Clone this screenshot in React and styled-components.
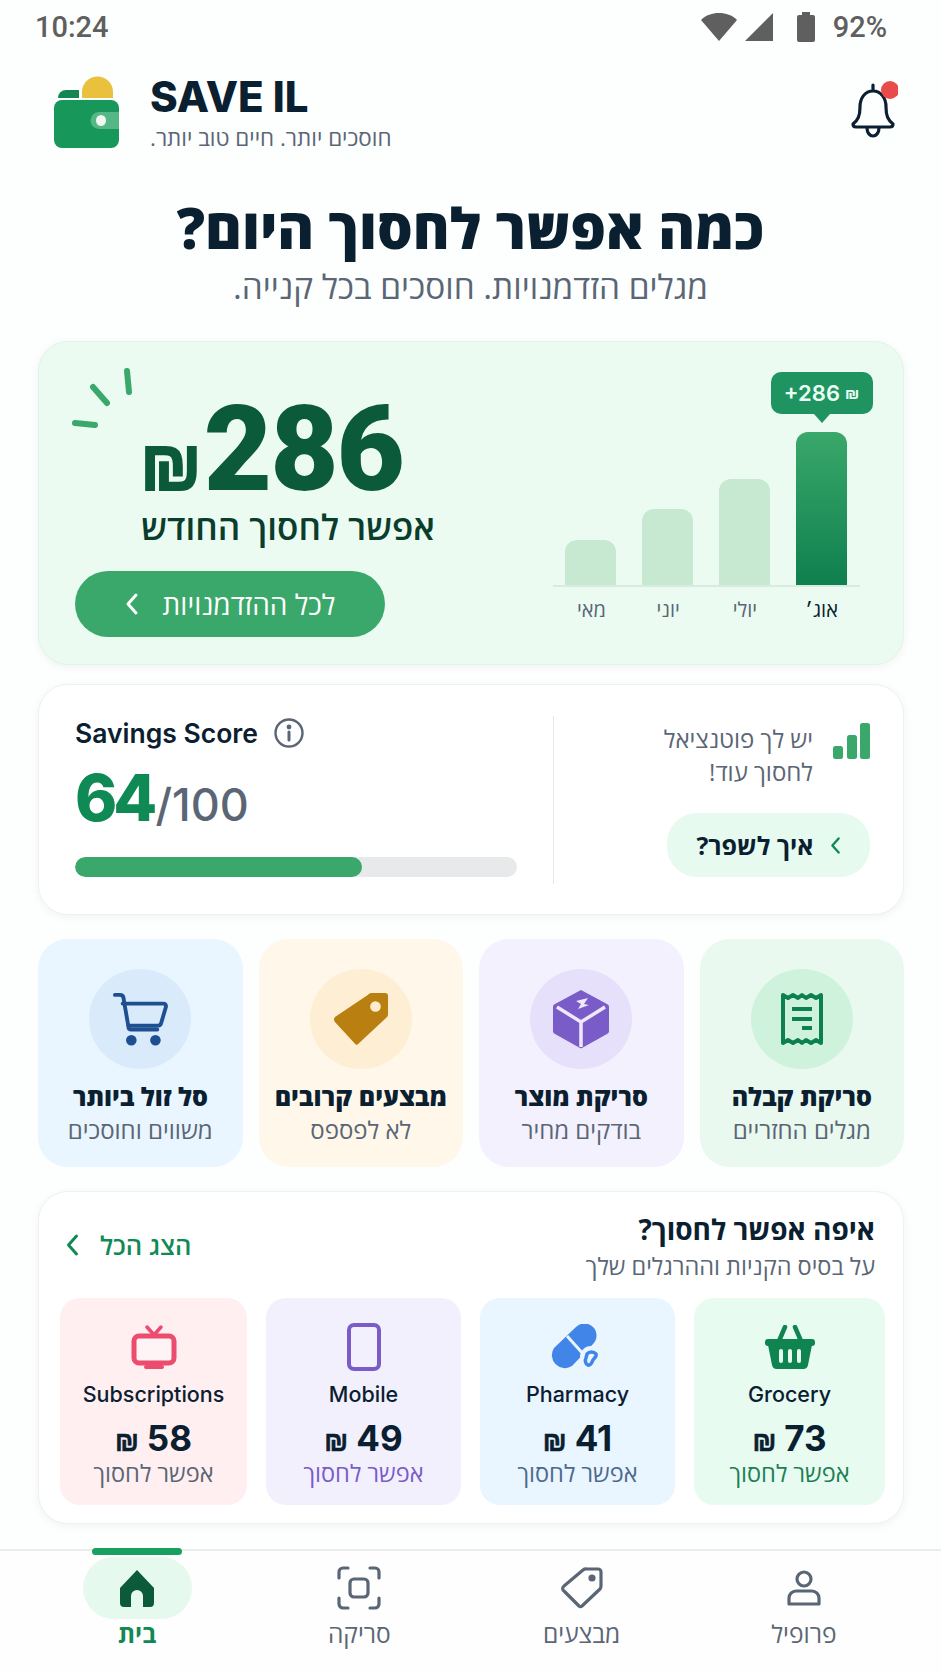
import React from 'react';
import styled, { createGlobalStyle } from 'styled-components';

const HEB = `"Open Sans", "Liberation Sans", sans-serif`;
const INK = '#0a2030';
const GREY = '#5a6675';
const GREEN = '#3aa86a';
const DEEP = '#0f8a55';

const Global = createGlobalStyle`
  html, body { margin: 0; padding: 0; background: #fdfefe; }
  * { box-sizing: border-box; }
  p, h1, h2, h3 { margin: 0; font-weight: inherit; }
`;

const Page = styled.div`
  width: 941px;
  height: 1672px;
  display: flex;
  flex-direction: column;
  overflow: hidden;
  background: #fdfefe;
  font-family: ${HEB};
  color: ${INK};
`;

const StatusBar = styled.div`
  height: 54px;
  direction: ltr;
  display: flex;
  align-items: center;
  justify-content: space-between;
  padding: 0 54px 0 35px;
  color: #5f5f5f;
  font-family: Roboto, sans-serif;
  font-size: 29px;
  font-weight: 500;
`;

const StatusIcons = styled.div`
  display: flex;
  align-items: center;
  gap: 8px;
`;

const Battery = styled.svg`
  margin-left: 16px;
`;

const Percent = styled.span`
  margin-left: 10px;
`;

const Header = styled.header`
  direction: ltr;
  height: 100px;
  margin-top: 12px;
  padding: 10px 43px 0 54px;
  display: flex;
  align-items: flex-start;
  justify-content: space-between;
`;

const Brand = styled.div`
  display: flex;
  gap: 31px;
`;

const BrandName = styled.div`
  font-family: Inter, sans-serif;
  font-weight: 800;
  font-size: 42px;
  line-height: 48px;
  margin-top: -3px;
`;

const BrandTag = styled.p`
  direction: rtl;
  text-align: right;
  font-size: 22.4px;
  line-height: 26px;
  color: ${GREY};
  margin-top: 4px;
`;

const BellWrap = styled.div`
  margin-top: 5px;
`;

const Hero = styled.div`
  text-align: center;
  margin-top: 26px;
  height: 149px;
`;

const Title = styled.h1`
  font-size: 56px;
  font-weight: 800;
  line-height: 64px;
  margin-top: 3px;
`;

const Lead = styled.p`
  font-size: 33.4px;
  line-height: 44px;
  color: ${GREY};
  margin-top: 5px;
`;

const Main = styled.main`
  padding: 0 37px 0 38px;
  display: flex;
  flex-direction: column;
`;

const Card = styled.section`
  border-radius: 30px;
  background: #fff;
  border: 1px solid #eef1f0;
  box-shadow: 0 2px 10px rgba(20, 50, 40, 0.05);
`;

const SaveCard = styled(Card)`
  position: relative;
  height: 324px;
  background: #ebfbf2;
  border-color: #dff5e7;
  display: flex;
  padding: 31px 43px 0 36px;
  justify-content: space-between;
`;

const Rays = styled.svg`
  position: absolute;
  left: 30px;
  top: 20px;
`;

const Chart = styled.div`
  width: 307px;
  display: flex;
  flex-direction: column;
`;

const Bars = styled.div`
  height: 214px;
  display: flex;
  align-items: flex-end;
  gap: 26px;
  padding: 0 13px;
  border-bottom: 2px solid #d9ebe0;
`;

const BarCol = styled.div`
  width: 51px;
  display: flex;
  flex-direction: column;
  align-items: center;
`;

const Bar = styled.div`
  width: 51px;
  height: ${(p) => p.$h}px;
  border-radius: 12px 12px 0 0;
  background: ${(p) => (p.$on ? `linear-gradient(#3aa86a, #0f7f4f)` : '#c7e9d2')};
`;

const Badge = styled.div`
  direction: ltr;
  width: 102px;
  height: 42px;
  flex-shrink: 0;
  border-radius: 10px;
  background: #1f9360;
  color: #eafff3;
  font-family: Inter, sans-serif;
  font-size: 22px;
  font-weight: 600;
  display: flex;
  align-items: center;
  justify-content: center;
  gap: 5px;
`;

const BadgeShekel = styled.span`
  font-size: 16px;
`;

const Tail = styled.div`
  width: 0;
  height: 0;
  margin-bottom: 9px;
  border: 8px solid transparent;
  border-bottom: 0;
  border-top: 9px solid #1f9360;
`;

const Months = styled.div`
  display: flex;
  gap: 26px;
  padding: 0 13px;
  margin-top: 8px;
`;

const Month = styled.span`
  width: 51px;
  text-align: center;
  font-size: 20px;
  line-height: 30px;
  color: ${(p) => (p.$on ? INK : GREY)};
`;

const SaveInfo = styled.div`
  width: 360px;
  display: flex;
  flex-direction: column;
`;

const Amount = styled.div`
  margin-top: 23px;
  padding: 0 32px 0 65px;
  display: flex;
  align-items: baseline;
  justify-content: space-between;
  color: #0b5a3a;
  font-family: Roboto, sans-serif;
  font-weight: 900;
  font-size: 118px;
  line-height: 108px;
  height: 108px;
  letter-spacing: -2px;
`;

const AmountShekel = styled.span`
  font-family: "Liberation Sans", sans-serif;
  font-size: 70px;
  font-weight: 700;
  letter-spacing: 0;
  -webkit-text-stroke: 2px #0b5a3a;
`;

const SaveText = styled.p`
  font-size: 35px;
  font-weight: 600;
  line-height: 46px;
  color: #0a3d2c;
  padding-left: 66px;
  white-space: nowrap;
`;

const AllButton = styled.div`
  margin-top: 21px;
  align-self: flex-end;
  width: 310px;
  height: 66px;
  border-radius: 33px;
  background: ${GREEN};
  color: #fff;
  font-size: 28px;
  font-weight: 500;
  display: flex;
  align-items: center;
  justify-content: center;
  gap: 24px;
`;

const ScoreCard = styled(Card)`
  margin-top: 19px;
  height: 231px;
  display: flex;
  padding: 31px 33px 0 36px;
`;

const Tip = styled.div`
  width: 203px;
  display: flex;
  flex-direction: column;
  align-items: flex-start;
`;

const TipHead = styled.div`
  width: 100%;
  display: flex;
  gap: 20px;
`;

const TipBars = styled.svg`
  margin-top: 7px;
  flex-shrink: 0;
`;

const TipText = styled.p`
  padding-top: 6px;
  font-size: 24px;
  line-height: 33px;
  color: ${GREY};
  white-space: nowrap;
`;

const TipButton = styled.div`
  margin-top: 25px;
  width: 203px;
  height: 64px;
  border-radius: 30px;
  background: #e7faf0;
  font-size: 25px;
  font-weight: 700;
  display: flex;
  align-items: center;
  justify-content: center;
  gap: 16px;
`;

const Divider = styled.div`
  width: 1px;
  height: 168px;
  background: #e4e8e8;
  margin: 0 113px 0 36px;
`;

const Score = styled.div`
  width: 442px;
  direction: ltr;
  display: flex;
  flex-direction: column;
`;

const ScoreHead = styled.div`
  display: flex;
  align-items: center;
  gap: 16px;
  height: 34px;
  font-family: Inter, sans-serif;
  font-size: 26.5px;
  font-weight: 600;
`;

const ScoreValue = styled.div`
  display: flex;
  align-items: baseline;
  margin-top: 10px;
  height: 76px;
  font-family: Inter, sans-serif;
`;

const ScoreNum = styled.span`
  font-size: 64px;
  line-height: 76px;
  font-weight: 800;
  color: ${DEEP};
  letter-spacing: -4px;
`;

const ScoreMax = styled.span`
  font-size: 45px;
  font-weight: 500;
  color: ${GREY};
  margin-left: 2px;
`;

const Track = styled.div`
  height: 20px;
  margin-top: 21px;
  border-radius: 10px;
  background: #e8e9eb;
  overflow: hidden;
`;

const Fill = styled.div`
  height: 100%;
  border-radius: 10px;
  background: ${GREEN};
`;

const Tiles = styled.div`
  margin-top: 24px;
  display: grid;
  grid-template-columns: repeat(4, 1fr);
  gap: 16px;
`;

const Tile = styled.div`
  height: 228px;
  border-radius: 30px;
  background: ${(p) => p.$bg};
  display: flex;
  flex-direction: column;
  align-items: center;
  padding-top: 30px;
`;

const TileCircle = styled.div`
  width: 102px;
  height: 100px;
  border-radius: 50%;
  background: ${(p) => p.$bg};
  display: flex;
  align-items: center;
  justify-content: center;
`;

const TileTitle = styled.h3`
  margin-top: 10px;
  font-size: 25px;
  line-height: 34px;
  font-weight: 800;
  white-space: nowrap;
`;

const TileSub = styled.p`
  margin-top: 2px;
  font-size: 24px;
  line-height: 30px;
  color: ${GREY};
  white-space: nowrap;
`;

const WhereCard = styled(Card)`
  margin-top: 24px;
  height: 333px;
  padding: 18px 18px 0 21px;
`;

const WhereHead = styled.div`
  display: flex;
  justify-content: space-between;
  align-items: flex-start;
  padding: 0 10px 0 5px;
  height: 88px;
`;

const WhereTitle = styled.h2`
  font-size: 28px;
  line-height: 38px;
  font-weight: 700;
`;

const WhereSub = styled.p`
  font-size: 23.5px;
  line-height: 30px;
  margin-top: 3px;
  color: ${GREY};
`;

const ShowAll = styled.div`
  display: flex;
  align-items: center;
  gap: 20px;
  font-size: 25.5px;
  line-height: 34px;
  font-weight: 600;
  color: ${DEEP};
  margin-top: 18px;
`;

const Minis = styled.div`
  display: grid;
  grid-template-columns: 191px 195px 195px 187px;
  gap: 19px;
`;

const Mini = styled.div`
  height: 207px;
  border-radius: 20px;
  background: ${(p) => p.$bg};
  display: flex;
  flex-direction: column;
  align-items: center;
  padding-top: 24px;
`;

const MiniIcon = styled.div`
  height: 50px;
  display: flex;
  align-items: center;
  justify-content: center;
`;

const MiniLabel = styled.div`
  margin-top: 7px;
  font-family: Inter, sans-serif;
  font-size: 21.5px;
  line-height: 30px;
  font-weight: 500;
`;

const MiniAmount = styled.div`
  margin-top: 7px;
  font-family: Inter, sans-serif;
  font-size: 35px;
  line-height: 44px;
  font-weight: 700;
  display: flex;
  align-items: baseline;
  gap: 8px;
`;

const MiniShekel = styled.span`
  font-family: "Liberation Sans", sans-serif;
  font-size: 27px;
  font-weight: 700;
  -webkit-text-stroke: 0.6px ${INK};
`;

const MiniSub = styled.div`
  font-size: 23.5px;
  line-height: 30px;
  margin-top: -6px;
  color: ${(p) => p.$c};
`;

const Nav = styled.nav`
  margin-top: auto;
  height: 123px;
  border-top: 2px solid #ececec;
  padding: 0 26px;
  direction: ltr;
  display: grid;
  grid-template-columns: repeat(4, 1fr);
  background: #fefefe;
`;

const NavItem = styled.div`
  position: relative;
  display: flex;
  flex-direction: column;
  align-items: center;
  padding-top: 6px;
  color: ${(p) => (p.$on ? DEEP : GREY)};
  font-size: 24.5px;
  font-weight: ${(p) => (p.$on ? 700 : 400)};
`;

const NavPill = styled.div`
  width: 109px;
  height: 62px;
  border-radius: 31px;
  display: flex;
  align-items: center;
  justify-content: center;
  background: ${(p) => (p.$on ? '#e5f9ee' : 'transparent')};
`;

const NavBar = styled.div`
  position: absolute;
  top: -3px;
  width: 90px;
  height: 7px;
  border-radius: 4px;
  background: #17a05f;
`;

const NavLabel = styled.span`
  line-height: 30px;
  direction: rtl;
`;

const Chevron = ({ c = 'currentColor', w = 14, h = 24, sw = 3 }) => (
  <svg width={w} height={h} viewBox="0 0 14 24" fill="none" stroke={c} strokeWidth={sw} strokeLinecap="round" strokeLinejoin="round">
    <path d="M11 3 3 12l8 9" />
  </svg>
);

const LogoIcon = () => (
  <svg width="65" height="72" viewBox="0 0 65 72">
    <path d="M28 22v-6a15.500 15.500 0 0 1 31 0v6z" fill="#e9c13c" />
    <path d="M4 22a8 8 0 0 1 8-8h13v8z" fill="#13874f" />
    <rect x="0" y="24" width="65" height="48" rx="8" fill="#17985a" />
    <path d="M45 36h20v17H45a8.500 8.500 0 0 1 0-17z" fill="#54b785" />
    <ellipse cx="47" cy="44.500" rx="5" ry="5.500" fill="#f2f7ef" />
  </svg>
);

const BellIcon = () => (
  <svg width="48" height="58" viewBox="0 0 48 58" fill="none">
    <path d="M23 10c-8 0-13 7-13 16 0 9-2 13-7 17 0 2 1 3 3 3h34c2 0 3-1 3-3-5-4-7-8-7-17 0-9-5-16-13-16zM23 4v6M17 47c0 5 3 8 6 8s6-3 6-8" stroke={INK} strokeWidth="3.200" strokeLinejoin="round" strokeLinecap="round" />
    <circle cx="40" cy="9" r="9" fill="#e94b4b" />
  </svg>
);

const InfoIcon = () => (
  <svg width="30" height="30" viewBox="0 0 30 30" fill="none" stroke={GREY} strokeWidth="2.400" strokeLinecap="round">
    <circle cx="15" cy="15" r="13.500" />
    <path d="M15 14v8" strokeWidth="3" />
    <circle cx="15" cy="9" r="1.200" fill={GREY} />
  </svg>
);

const SignalBars = () => (
  <TipBars width="37" height="36" viewBox="0 0 37 36" fill={GREEN}>
    <rect x="27" y="0" width="10" height="36" rx="2.500" />
    <rect x="14" y="12" width="10" height="24" rx="2.500" />
    <rect x="0" y="23" width="10" height="13" rx="2.500" />
  </TipBars>
);

const ReceiptIcon = () => (
  <svg width="42" height="54" viewBox="0 0 42 54" fill="none">
    <path d="M2 3l5 3 5-3 5 3 4-3 4 3 5-3 5 3 5-3v48l-5-3-5 3-5-3-4 3-4-3-5 3-5-3-5 3z" stroke="#0d8050" strokeWidth="4" strokeLinejoin="round" />
    <path d="M11 17h20M11 27h20M21 36h10" stroke="#0d8050" strokeWidth="4" />
  </svg>
);

const BoxIcon = () => (
  <svg width="58" height="60" viewBox="0 0 58 60">
    <path d="M29 1 55 15a3 3 0 0 1 2 3v24a3 3 0 0 1-2 3L30 59a2 2 0 0 1-2 0L3 45a3 3 0 0 1-2-3V18a3 3 0 0 1 2-3z" fill="#7a5cc8" />
    <path d="M5 18l24 15 24-15M29 33v25" fill="none" stroke="#efe8fb" strokeWidth="3.500" />
    <path d="M24 12l12-3-4 6 5 1-11 4 3-5z" fill="#efe8fb" />
  </svg>
);

const TagFilled = () => (
  <svg width="56" height="54" viewBox="0 0 58 56">
    <path d="M40 1h14a3 3 0 0 1 3 3v19a4 4 0 0 1-1 3L26 54a2 2 0 0 1-3 0L2 31a4 4 0 0 1 0-5L36 3a5 5 0 0 1 4-2z" fill="#b97f10" />
    <ellipse cx="44" cy="15" rx="5.500" ry="5.500" fill="#fdeccc" />
  </svg>
);

const CartIcon = () => (
  <svg width="56" height="54" viewBox="0 0 58 56" fill="none" stroke="#1d4f91" strokeWidth="4" strokeLinecap="round" strokeLinejoin="round">
    <path d="M3 3h5c3 0 4 2 4 4l5 29c0 2 1 3 3 3h27" />
    <path d="M11 12h42c2 0 3 1 3 3l-5 17c0 2-2 3-4 3H17" />
    <circle cx="20" cy="50" r="3.500" fill="#1d4f91" />
    <circle cx="45" cy="50" r="3.500" fill="#1d4f91" />
  </svg>
);

const BasketIcon = () => (
  <svg width="50" height="44" viewBox="0 0 50 44">
    <path d="M14 16 20 2M36 16 30 2" stroke="#0f8450" strokeWidth="4.500" strokeLinecap="round" />
    <rect x="0" y="14" width="50" height="7" rx="3" fill="#0f8450" />
    <path d="M3 20h44l-4 20a5 5 0 0 1-5 4H12a5 5 0 0 1-5-4z" fill="#0f8450" />
    <path d="M16 26v10M25 26v10M34 26v10" stroke="#e8faf0" strokeWidth="4" strokeLinecap="round" />
  </svg>
);

const PillIcon = () => (
  <svg width="54" height="46" viewBox="0 0 54 46">
    <path d="M25 3a12 12 0 0 1 17 17L21 42A13 13 0 0 1 3 24z" fill="#4285e8" />
    <path d="M16 12l18 20" stroke="#e9f5ff" strokeWidth="3" />
    <circle cx="40" cy="33" r="11" fill="#e9f5ff" />
    <path d="M36 30a6 6 0 0 1 9 0c1 3-2 4-3 6s-2 6-5 5-3-5-2-7z" fill="none" stroke="#4285e8" strokeWidth="3.500" />
  </svg>
);

const PhoneIcon = () => (
  <svg width="34" height="48" viewBox="0 0 34 48" fill="none">
    <rect x="2" y="2" width="30" height="44" rx="5" stroke="#7a5cc8" strokeWidth="4" />
  </svg>
);

const TvIcon = () => (
  <svg width="46" height="44" viewBox="0 0 46 44" fill="none" stroke="#ec4d6f" strokeLinecap="round">
    <path d="M16 2l7 8 7-8" strokeWidth="3.500" />
    <rect x="3" y="11" width="40" height="27" rx="5" strokeWidth="5" fill="#fff4f5" />
    <path d="M15 42h16" strokeWidth="4" />
  </svg>
);

const HomeIcon = () => (
  <svg width="38" height="38" viewBox="0 0 38 38">
    <path d="M19 1 36 19v15a4 4 0 0 1-4 4h-7V27a6 6 0 0 0-12 0v11H6a4 4 0 0 1-4-4V19z" fill="#0b5a3a" />
  </svg>
);

const ScanIcon = () => (
  <svg width="44" height="44" viewBox="0 0 44 44" fill="none" stroke={GREY} strokeWidth="3.200" strokeLinecap="round" strokeLinejoin="round">
    <path d="M2 12V6a4 4 0 0 1 4-4h5M33 2h5a4 4 0 0 1 4 4v6M42 32v6a4 4 0 0 1-4 4h-5M11 42H6a4 4 0 0 1-4-4v-6" />
    <rect x="13" y="13" width="18" height="18" rx="4" />
  </svg>
);

const TagOutline = () => (
  <svg width="42" height="42" viewBox="0 0 42 42" fill="none" stroke={GREY} strokeWidth="3.200" strokeLinejoin="round">
    <path d="M26 2h11a3 3 0 0 1 3 3v14a5 5 0 0 1-1 3L21 39a2 2 0 0 1-3 0L3 24a3 3 0 0 1 0-5L22 3a5 5 0 0 1 4-1z" />
    <circle cx="31" cy="11" r="2" fill={GREY} />
  </svg>
);

const UserIcon = () => (
  <svg width="34" height="36" viewBox="0 0 34 36" fill="none" stroke={GREY} strokeWidth="3.200" strokeLinejoin="round">
    <circle cx="17" cy="9" r="7" />
    <path d="M2 34v-6a7 7 0 0 1 7-7h16a7 7 0 0 1 7 7v6z" />
  </svg>
);

const months = [
  { name: 'אוג׳', h: 153, on: true },
  { name: 'יולי', h: 106 },
  { name: 'יוני', h: 76 },
  { name: 'מאי', h: 45 },
];

const tiles = [
  { title: 'סריקת קבלה', sub: 'מגלים החזריים', bg: '#e9f9ef', circle: '#cff2dc', icon: <ReceiptIcon /> },
  { title: 'סריקת מוצר', sub: 'בודקים מחיר', bg: '#f4f1fe', circle: '#e7e0fa', icon: <BoxIcon /> },
  { title: 'מבצעים קרובים', sub: 'לא לפספס', bg: '#fff8ea', circle: '#fdeed4', icon: <TagFilled /> },
  { title: 'סל זול ביותר', sub: 'משווים וחוסכים', bg: '#e9f5ff', circle: '#d9eafb', icon: <CartIcon /> },
];

const minis = [
  { label: 'Grocery', amount: 73, bg: '#e8fbf0', c: '#1b7f55', icon: <BasketIcon /> },
  { label: 'Pharmacy', amount: 41, bg: '#e9f5ff', c: '#4d6a8c', icon: <PillIcon /> },
  { label: 'Mobile', amount: 49, bg: '#f3f0fe', c: '#7a5cc8', icon: <PhoneIcon /> },
  { label: 'Subscriptions', amount: 58, bg: '#ffeff1', c: GREY, icon: <TvIcon /> },
];

const navItems = [
  { label: 'בית', on: true, icon: <HomeIcon /> },
  { label: 'סריקה', icon: <ScanIcon /> },
  { label: 'מבצעים', icon: <TagOutline /> },
  { label: 'פרופיל', icon: <UserIcon /> },
];

export default function App() {
  return (
    <Page dir="rtl">
      <Global />
      <StatusBar>
        <span>10:24</span>
        <StatusIcons>
          <svg width="36" height="28" viewBox="0 0 36 28" fill="#5f5f5f"><path d="M18 28 0 7C5 2 11 0 18 0s13 2 18 7z" /></svg>
          <svg width="28" height="28" viewBox="0 0 28 28" fill="#5f5f5f"><path d="M28 0v28H0z" /></svg>
          <Battery width="18" height="30" viewBox="0 0 18 30" fill="#5f5f5f"><path d="M5 0h8v3h3a2 2 0 0 1 2 2v23a2 2 0 0 1-2 2H2a2 2 0 0 1-2-2V5a2 2 0 0 1 2-2h3z" /></Battery>
          <Percent>92%</Percent>
        </StatusIcons>
      </StatusBar>

      <Header>
        <Brand>
          <LogoIcon />
          <div>
            <BrandName>SAVE IL</BrandName>
            <BrandTag>חוסכים יותר. חיים טוב יותר.</BrandTag>
          </div>
        </Brand>
        <BellWrap><BellIcon /></BellWrap>
      </Header>

      <Hero>
        <Title>כמה אפשר לחסוך היום?</Title>
        <Lead>מגלים הזדמנויות. חוסכים בכל קנייה.</Lead>
      </Hero>

      <Main>
        <SaveCard>
          <Rays width="70" height="70" viewBox="0 0 70 70" fill="none" stroke={GREEN} strokeWidth="6" strokeLinecap="round">
            <path d="M6 61l20 2M24 25l14 16M58 9l2 21" />
          </Rays>
          <Chart>
            <Bars>
              {months.map((m) => (
                <BarCol key={m.name}>
                  {m.on && (
                    <>
                      <Badge>+286 <BadgeShekel>₪</BadgeShekel></Badge>
                      <Tail />
                    </>
                  )}
                  <Bar $h={m.h} $on={m.on} />
                </BarCol>
              ))}
            </Bars>
            <Months>
              {months.map((m) => (
                <Month key={m.name} $on={m.on}>{m.name}</Month>
              ))}
            </Months>
          </Chart>
          <SaveInfo>
            <Amount>
              <span>286</span>
              <AmountShekel>₪</AmountShekel>
            </Amount>
            <SaveText>אפשר לחסוך החודש</SaveText>
            <AllButton>
              לכל ההזדמנויות
              <Chevron c="#fff" />
            </AllButton>
          </SaveInfo>
        </SaveCard>

        <ScoreCard>
          <Tip>
            <TipHead>
              <SignalBars />
              <TipText>יש לך פוטנציאל<br />לחסוך עוד!</TipText>
            </TipHead>
            <TipButton>
              <Chevron c={DEEP} w={11} h={19} />
              איך לשפר?
            </TipButton>
          </Tip>
          <Divider />
          <Score>
            <ScoreHead>Savings Score <InfoIcon /></ScoreHead>
            <ScoreValue>
              <ScoreNum>64</ScoreNum>
              <ScoreMax>/100</ScoreMax>
            </ScoreValue>
            <Track><Fill style={{ width: '65%' }} /></Track>
          </Score>
        </ScoreCard>

        <Tiles>
          {tiles.map((t) => (
            <Tile key={t.title} $bg={t.bg}>
              <TileCircle $bg={t.circle}>{t.icon}</TileCircle>
              <TileTitle>{t.title}</TileTitle>
              <TileSub>{t.sub}</TileSub>
            </Tile>
          ))}
        </Tiles>

        <WhereCard>
          <WhereHead>
            <div>
              <WhereTitle>איפה אפשר לחסוך?</WhereTitle>
              <WhereSub>על בסיס הקניות וההרגלים שלך</WhereSub>
            </div>
            <ShowAll>
              הצג הכל
              <Chevron c={DEEP} w={15} h={24} />
            </ShowAll>
          </WhereHead>
          <Minis>
            {minis.map((m) => (
              <Mini key={m.label} $bg={m.bg}>
                <MiniIcon>{m.icon}</MiniIcon>
                <MiniLabel>{m.label}</MiniLabel>
                <MiniAmount>
                  <span>{m.amount}</span>
                  <MiniShekel>₪</MiniShekel>
                </MiniAmount>
                <MiniSub $c={m.c}>אפשר לחסוך</MiniSub>
              </Mini>
            ))}
          </Minis>
        </WhereCard>
      </Main>

      <Nav>
        {navItems.map((n) => (
          <NavItem key={n.label} $on={n.on}>
            {n.on && <NavBar />}
            <NavPill $on={n.on}>{n.icon}</NavPill>
            <NavLabel>{n.label}</NavLabel>
          </NavItem>
        ))}
      </Nav>
    </Page>
  );
}
